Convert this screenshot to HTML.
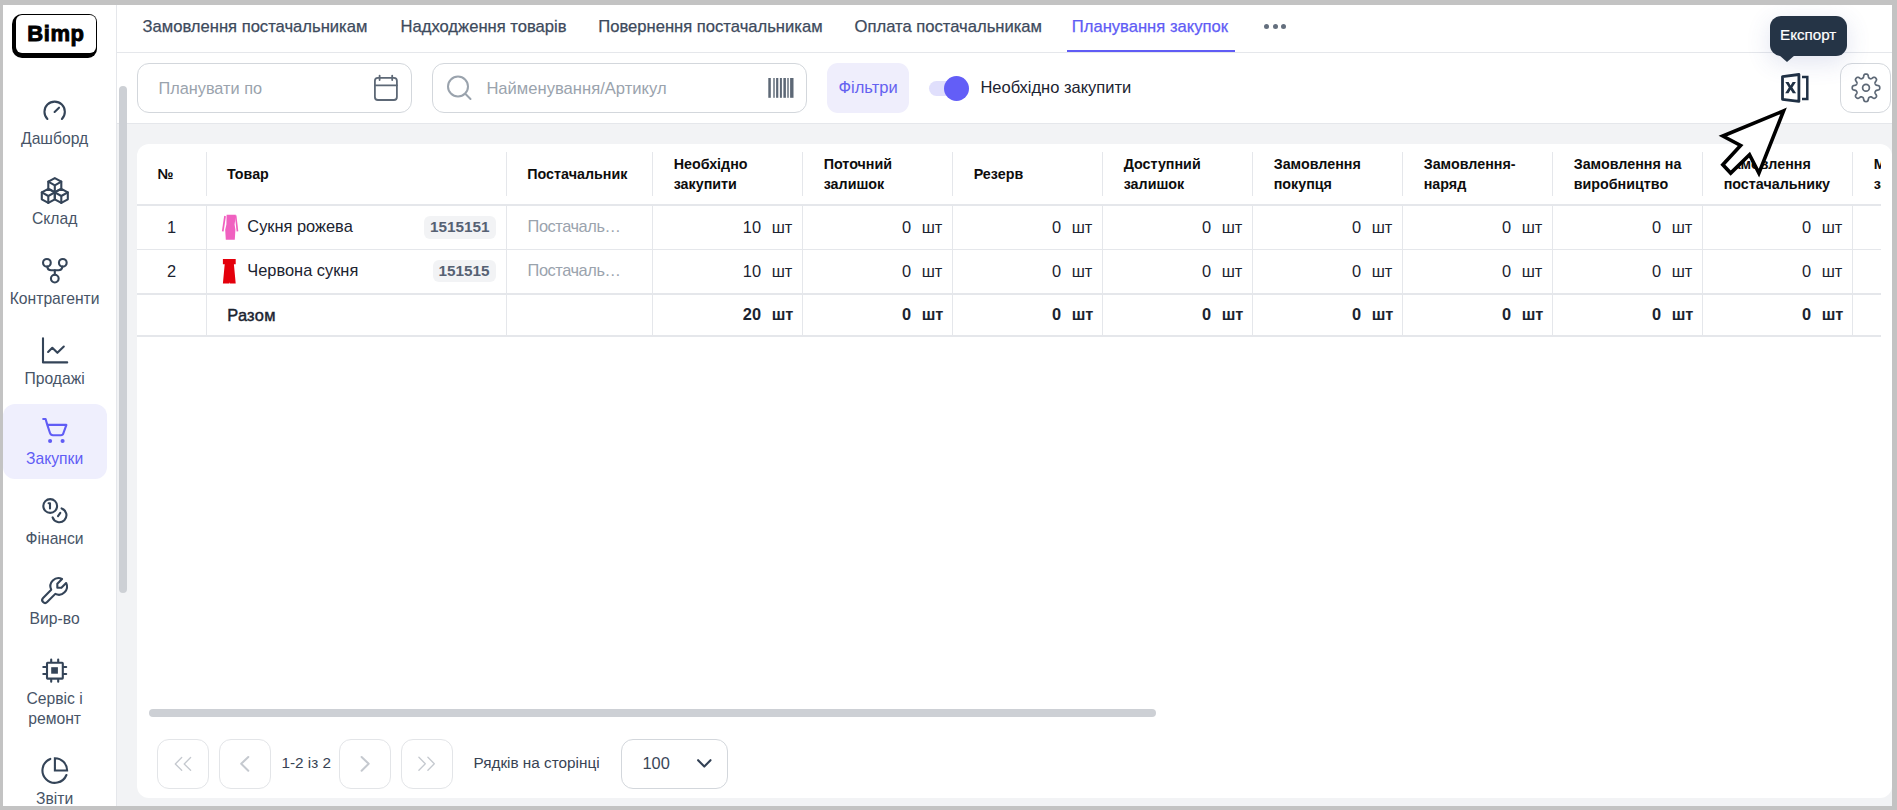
<!DOCTYPE html>
<html><head><meta charset="utf-8"><style>
html,body{margin:0;padding:0}
body{width:1897px;height:810px;position:relative;overflow:hidden;background:#c3c3c3;font-family:"Liberation Sans",sans-serif}
.t{position:absolute;white-space:nowrap}
svg{pointer-events:none}
</style></head><body>
<div style="position:absolute;left:3px;top:5px;width:1889px;height:801px;background:#fff"></div>
<div style="position:absolute;left:117px;top:124px;width:1775px;height:682px;background:#f2f3f5"></div>
<div style="position:absolute;left:117px;top:52px;width:1775px;height:1px;background:#e5e7eb"></div>
<div style="position:absolute;left:117px;top:123px;width:1775px;height:1px;background:#e5e7eb"></div>
<div style="position:absolute;left:116px;top:5px;width:1px;height:801px;background:#e5e7eb"></div>
<div style="position:absolute;left:12px;top:14px;width:85px;height:44px;background:#000;border-radius:10px 8px 9px 10px"></div>
<div style="position:absolute;left:16px;top:15px;width:80px;height:38px;background:#fff;border-radius:6px"></div>
<div class="t" style="left:27.3px;top:20px;font-size:22px;line-height:28px;color:#000;font-weight:700;-webkit-text-stroke:0.9px #000;letter-spacing:0.55px">Bimp</div>
<div style="position:absolute;left:3px;top:404px;width:104px;height:75px;background:#efeffd;border-radius:12px"></div>
<div class="t" style="left:-245.4px;width:600px;text-align:center;top:129px;font-size:15.7px;line-height:20px;color:#475467;font-weight:400;">Дашборд</div>
<div class="t" style="left:-245.4px;width:600px;text-align:center;top:209px;font-size:15.7px;line-height:20px;color:#475467;font-weight:400;">Склад</div>
<div class="t" style="left:-245.4px;width:600px;text-align:center;top:289px;font-size:15.7px;line-height:20px;color:#475467;font-weight:400;">Контрагенти</div>
<div class="t" style="left:-245.4px;width:600px;text-align:center;top:369px;font-size:15.7px;line-height:20px;color:#475467;font-weight:400;">Продажі</div>
<div class="t" style="left:-245.4px;width:600px;text-align:center;top:449px;font-size:15.7px;line-height:20px;color:#605cf5;font-weight:400;">Закупки</div>
<div class="t" style="left:-245.4px;width:600px;text-align:center;top:529px;font-size:15.7px;line-height:20px;color:#475467;font-weight:400;">Фінанси</div>
<div class="t" style="left:-245.4px;width:600px;text-align:center;top:609px;font-size:15.7px;line-height:20px;color:#475467;font-weight:400;">Вир-во</div>
<div class="t" style="left:-245.4px;width:600px;text-align:center;top:689px;font-size:15.7px;line-height:20px;color:#475467;font-weight:400;">Сервіс і</div>
<div class="t" style="left:-245.4px;width:600px;text-align:center;top:709px;font-size:15.7px;line-height:20px;color:#475467;font-weight:400;">ремонт</div>
<div class="t" style="left:-245.4px;width:600px;text-align:center;top:789px;font-size:15.7px;line-height:20px;color:#475467;font-weight:400;">Звіти</div>
<svg style="position:absolute;left:0;top:0;overflow:visible" width="1897" height="810" viewBox="0 0 1897 810" fill="none"><g stroke="#344458" stroke-width="2.1" stroke-linecap="round" stroke-linejoin="round"><path d="M47.4 119.0 A10.2 10.2 0 1 1 61.9 119.0"/><path d="M54.6 111.9 L59.0 107.7"/><path d="M54.8 178.1 L61.3 181.7 V188.6 L54.8 192.2 L48.3 188.6 V181.7 Z"/><path d="M48.3 181.7 L54.8 185.29999999999998 L61.3 181.7 M54.8 185.29999999999998 V192.2"/><path d="M48.3 188.8 L54.8 192.4 V199.3 L48.3 202.9 L41.8 199.3 V192.4 Z"/><path d="M41.8 192.4 L48.3 196.0 L54.8 192.4 M48.3 196.0 V202.9"/><path d="M61.3 188.8 L67.8 192.4 V199.3 L61.3 202.9 L54.8 199.3 V192.4 Z"/><path d="M54.8 192.4 L61.3 196.0 L67.8 192.4 M61.3 196.0 V202.9"/><circle cx="46.9" cy="262.8" r="3.85"/><circle cx="62.8" cy="262.8" r="3.85"/><circle cx="54.8" cy="278.6" r="3.85"/><path d="M47.4 266.6 Q47.6 270.2 51.2 270.2 H58.4 Q62.0 270.2 62.3 266.6"/><path d="M54.8 270.2 V274.7"/><path d="M43.0 338.2 V362.4 H67.2" stroke-linejoin="round"/><path d="M48.1 352.0 L52.3 347.8 L57.4 352.8 L63.8 346.5"/><circle cx="50.2" cy="506.0" r="6.9"/><path d="M48.6 503.3 H50.0 V508.4"/><path d="M61.6 508.4 A7.1 7.1 0 1 1 52.6 517.4"/><path d="M58.0 516.2 L60.3 512.8"/><path transform="translate(70.9 574.2) scale(-1.357 1.357)" stroke-width="1.55" d="M7 10h3v-3l-3.5 -3.5a6 6 0 0 1 8 8l6 6a2 2 0 0 1 -3 3l-6 -6a6 6 0 0 1 -8 -8l3.5 3.5"/><rect x="47.0" y="662.8" width="15.8" height="15.8" rx="0.6"/><rect x="51.2" y="667.2" width="6.7" height="6.5" fill="#344458" stroke="none"/><path d="M51.2 659.6 V662 M58.2 659.6 V662 M51.2 679.4 V681.8 M58.2 679.4 V681.8 M43.3 667.0 H46 M43.3 674.0 H46 M63.8 667.0 H66.2 M63.8 674.0 H66.2"/><path d="M50.3 758.9 A12.4 12.4 0 1 0 66.4 775.0"/><path d="M54.9 758.2 V770.5 H67.1 A12.3 12.3 0 0 0 54.9 758.2 Z" stroke-linejoin="miter"/></g></svg>
<svg style="position:absolute;left:0;top:0;overflow:visible" width="1897" height="810" viewBox="0 0 1897 810" fill="none"><g stroke="#605cf5" stroke-width="2.1" stroke-linecap="round" stroke-linejoin="round"><path d="M43.2 419.0 H45.6 L47.3 424.9 L50.0 433.0 Q50.7 435.2 53.0 435.2 H60.8 Q62.9 435.2 63.4 433.2 L66.4 424.9 H47.3"/></g><circle cx="50.1" cy="441.0" r="2.05" fill="#605cf5"/><circle cx="62.6" cy="441.0" r="2.05" fill="#605cf5"/></svg>
<div style="position:absolute;left:119px;top:86px;width:8px;height:507px;background:#cdd0d5;border-radius:4px"></div>
<div class="t" style="left:142.5px;top:16px;font-size:16.6px;line-height:21px;color:#3d4a5c;font-weight:400;-webkit-text-stroke:0.25px #3d4a5c">Замовлення постачальникам</div>
<div class="t" style="left:400.5px;top:16px;font-size:16.6px;line-height:21px;color:#3d4a5c;font-weight:400;-webkit-text-stroke:0.25px #3d4a5c">Надходження товарів</div>
<div class="t" style="left:598.3px;top:16px;font-size:16.6px;line-height:21px;color:#3d4a5c;font-weight:400;-webkit-text-stroke:0.25px #3d4a5c">Повернення постачальникам</div>
<div class="t" style="left:854.6px;top:16px;font-size:16.6px;line-height:21px;color:#3d4a5c;font-weight:400;-webkit-text-stroke:0.25px #3d4a5c">Оплата постачальникам</div>
<div class="t" style="left:1071.8px;top:16px;font-size:16.6px;line-height:21px;color:#605cf5;font-weight:400;-webkit-text-stroke:0.25px #605cf5">Планування закупок</div>
<div style="position:absolute;left:1067px;top:50px;width:168px;height:2px;background:#605cf5"></div>
<div style="position:absolute;left:1263.7px;top:23.5px;width:5px;height:5px;background:#646f7e;border-radius:50%"></div>
<div style="position:absolute;left:1272.5px;top:23.5px;width:5px;height:5px;background:#646f7e;border-radius:50%"></div>
<div style="position:absolute;left:1281.3px;top:23.5px;width:5px;height:5px;background:#646f7e;border-radius:50%"></div>
<div style="position:absolute;left:137px;top:63px;width:275px;height:50px;box-sizing:border-box;border:1px solid #d3d7dc;border-radius:12px;background:#fff"></div>
<div class="t" style="left:158.5px;top:78px;font-size:16.3px;line-height:21px;color:#9aa3ad;font-weight:400;">Планувати по</div>
<div style="position:absolute;left:432px;top:63px;width:375px;height:50px;box-sizing:border-box;border:1px solid #d3d7dc;border-radius:12px;background:#fff"></div>
<div class="t" style="left:486.4px;top:78px;font-size:16.6px;line-height:21px;color:#9aa3ad;font-weight:400;">Найменування/Артикул</div>
<div style="position:absolute;left:827px;top:63px;width:82px;height:50px;background:#efeefc;border-radius:11px"></div>
<div class="t" style="left:838.5px;top:77px;font-size:16.5px;line-height:21px;color:#6461f0;font-weight:400;">Фільтри</div>
<div style="position:absolute;left:929px;top:81px;width:38px;height:15px;background:#e0dffc;border-radius:7.5px"></div>
<div style="position:absolute;left:944px;top:76px;width:25px;height:25px;background:#635ef7;border-radius:50%"></div>
<div class="t" style="left:980.4px;top:77px;font-size:16.5px;line-height:21px;color:#1b2330;font-weight:400;">Необхідно закупити</div>
<div style="position:absolute;left:1840px;top:63px;width:51px;height:50px;box-sizing:border-box;border:1px solid #d3d7dc;border-radius:12px;background:#fff"></div>
<svg style="position:absolute;left:0;top:0;overflow:visible" width="1897" height="810" viewBox="0 0 1897 810" fill="none"><g stroke="#5d6876" stroke-width="1.8" stroke-linecap="round" stroke-linejoin="round"><rect x="374.9" y="77.8" width="22" height="22.2" rx="3"/><path d="M374.9 85.3 H396.9 M379.6 75.6 V80.1 M392.2 75.6 V80.1"/></g><g stroke="#9aa3ad" stroke-width="2" stroke-linecap="round"><circle cx="458" cy="86.5" r="10"/><path d="M465.5 94 L470.5 99"/></g><rect x="768.3" y="78" width="2.5" height="19.8" fill="#5d6876"/><rect x="773.3" y="78" width="1.4" height="19.8" fill="#5d6876"/><rect x="776.1" y="78" width="2.2" height="19.8" fill="#5d6876"/><rect x="779.9" y="78" width="2.0" height="19.8" fill="#5d6876"/><rect x="783.4" y="78" width="2.5" height="19.8" fill="#5d6876"/><rect x="787.3" y="78" width="1.4" height="19.8" fill="#5d6876"/><rect x="790.1" y="78" width="3.4" height="19.8" fill="#5d6876"/><g stroke="#1f3044" fill="none"><path d="M1782.5 76.6 L1798.9 74.5 V101.4 L1782.5 99.3 Z" stroke-width="2.8" stroke-linejoin="round"/><path d="M1802 76.9 H1807.3 V98.9 H1802" stroke-width="2.5"/></g><path fill="#1f3044" d="M1785.3 82.1 L1788.6 82.1 L1790.6 85.4 L1792.6 82.1 L1795.9 82.1 L1792.4 87.6 L1796.1 93.3 L1792.8 93.3 L1790.6 89.8 L1788.5 93.3 L1785.2 93.3 L1788.8 87.6 Z"/><path d="M1879.75 87.80 L1879.74 88.04 L1879.73 88.28 L1879.69 88.52 L1879.64 88.75 L1879.57 88.99 L1879.46 89.21 L1879.29 89.43 L1879.06 89.64 L1878.73 89.82 L1878.30 89.97 L1877.80 90.09 L1877.28 90.20 L1876.81 90.30 L1876.43 90.40 L1876.14 90.52 L1875.93 90.65 L1875.77 90.79 L1875.65 90.94 L1875.55 91.09 L1875.47 91.25 L1875.39 91.40 L1875.32 91.57 L1875.25 91.73 L1875.19 91.89 L1875.13 92.06 L1875.08 92.23 L1875.04 92.41 L1875.02 92.60 L1875.03 92.81 L1875.09 93.05 L1875.22 93.34 L1875.41 93.68 L1875.68 94.08 L1875.97 94.52 L1876.23 94.96 L1876.43 95.37 L1876.53 95.74 L1876.55 96.05 L1876.52 96.32 L1876.43 96.56 L1876.32 96.77 L1876.19 96.98 L1876.05 97.17 L1875.89 97.35 L1875.72 97.52 L1875.55 97.69 L1875.37 97.85 L1875.18 97.99 L1874.97 98.12 L1874.76 98.23 L1874.52 98.32 L1874.25 98.35 L1873.94 98.33 L1873.57 98.23 L1873.16 98.03 L1872.72 97.77 L1872.28 97.48 L1871.88 97.21 L1871.54 97.02 L1871.25 96.89 L1871.01 96.83 L1870.80 96.82 L1870.61 96.84 L1870.43 96.88 L1870.26 96.93 L1870.09 96.99 L1869.93 97.05 L1869.77 97.12 L1869.60 97.19 L1869.45 97.27 L1869.29 97.35 L1869.14 97.45 L1868.99 97.57 L1868.85 97.73 L1868.72 97.94 L1868.60 98.23 L1868.50 98.61 L1868.40 99.08 L1868.29 99.60 L1868.17 100.10 L1868.02 100.53 L1867.84 100.86 L1867.63 101.09 L1867.41 101.26 L1867.19 101.37 L1866.95 101.44 L1866.72 101.49 L1866.48 101.53 L1866.24 101.54 L1866.00 101.55 L1865.76 101.54 L1865.52 101.53 L1865.28 101.49 L1865.05 101.44 L1864.81 101.37 L1864.59 101.26 L1864.37 101.09 L1864.16 100.86 L1863.98 100.53 L1863.83 100.10 L1863.71 99.60 L1863.60 99.08 L1863.50 98.61 L1863.40 98.23 L1863.28 97.94 L1863.15 97.73 L1863.01 97.57 L1862.86 97.45 L1862.71 97.35 L1862.55 97.27 L1862.40 97.19 L1862.23 97.12 L1862.07 97.05 L1861.91 96.99 L1861.74 96.93 L1861.57 96.88 L1861.39 96.84 L1861.20 96.82 L1860.99 96.83 L1860.75 96.89 L1860.46 97.02 L1860.12 97.21 L1859.72 97.48 L1859.28 97.77 L1858.84 98.03 L1858.43 98.23 L1858.06 98.33 L1857.75 98.35 L1857.48 98.32 L1857.24 98.23 L1857.03 98.12 L1856.82 97.99 L1856.63 97.85 L1856.45 97.69 L1856.28 97.52 L1856.11 97.35 L1855.95 97.17 L1855.81 96.98 L1855.68 96.77 L1855.57 96.56 L1855.48 96.32 L1855.45 96.05 L1855.47 95.74 L1855.57 95.37 L1855.77 94.96 L1856.03 94.52 L1856.32 94.08 L1856.59 93.68 L1856.78 93.34 L1856.91 93.05 L1856.97 92.81 L1856.98 92.60 L1856.96 92.41 L1856.92 92.23 L1856.87 92.06 L1856.81 91.89 L1856.75 91.73 L1856.68 91.57 L1856.61 91.40 L1856.53 91.25 L1856.45 91.09 L1856.35 90.94 L1856.23 90.79 L1856.07 90.65 L1855.86 90.52 L1855.57 90.40 L1855.19 90.30 L1854.72 90.20 L1854.20 90.09 L1853.70 89.97 L1853.27 89.82 L1852.94 89.64 L1852.71 89.43 L1852.54 89.21 L1852.43 88.99 L1852.36 88.75 L1852.31 88.52 L1852.27 88.28 L1852.26 88.04 L1852.25 87.80 L1852.26 87.56 L1852.27 87.32 L1852.31 87.08 L1852.36 86.85 L1852.43 86.61 L1852.54 86.39 L1852.71 86.17 L1852.94 85.96 L1853.27 85.78 L1853.70 85.63 L1854.20 85.51 L1854.72 85.40 L1855.19 85.30 L1855.57 85.20 L1855.86 85.08 L1856.07 84.95 L1856.23 84.81 L1856.35 84.66 L1856.45 84.51 L1856.53 84.35 L1856.61 84.20 L1856.68 84.03 L1856.75 83.87 L1856.81 83.71 L1856.87 83.54 L1856.92 83.37 L1856.96 83.19 L1856.98 83.00 L1856.97 82.79 L1856.91 82.55 L1856.78 82.26 L1856.59 81.92 L1856.32 81.52 L1856.03 81.08 L1855.77 80.64 L1855.57 80.23 L1855.47 79.86 L1855.45 79.55 L1855.48 79.28 L1855.57 79.04 L1855.68 78.83 L1855.81 78.62 L1855.95 78.43 L1856.11 78.25 L1856.28 78.08 L1856.45 77.91 L1856.63 77.75 L1856.82 77.61 L1857.03 77.48 L1857.24 77.37 L1857.48 77.28 L1857.75 77.25 L1858.06 77.27 L1858.43 77.37 L1858.84 77.57 L1859.28 77.83 L1859.72 78.12 L1860.12 78.39 L1860.46 78.58 L1860.75 78.71 L1860.99 78.77 L1861.20 78.78 L1861.39 78.76 L1861.57 78.72 L1861.74 78.67 L1861.91 78.61 L1862.07 78.55 L1862.23 78.48 L1862.40 78.41 L1862.55 78.33 L1862.71 78.25 L1862.86 78.15 L1863.01 78.03 L1863.15 77.87 L1863.28 77.66 L1863.40 77.37 L1863.50 76.99 L1863.60 76.52 L1863.71 76.00 L1863.83 75.50 L1863.98 75.07 L1864.16 74.74 L1864.37 74.51 L1864.59 74.34 L1864.81 74.23 L1865.05 74.16 L1865.28 74.11 L1865.52 74.07 L1865.76 74.06 L1866.00 74.05 L1866.24 74.06 L1866.48 74.07 L1866.72 74.11 L1866.95 74.16 L1867.19 74.23 L1867.41 74.34 L1867.63 74.51 L1867.84 74.74 L1868.02 75.07 L1868.17 75.50 L1868.29 76.00 L1868.40 76.52 L1868.50 76.99 L1868.60 77.37 L1868.72 77.66 L1868.85 77.87 L1868.99 78.03 L1869.14 78.15 L1869.29 78.25 L1869.45 78.33 L1869.60 78.41 L1869.77 78.48 L1869.93 78.55 L1870.09 78.61 L1870.26 78.67 L1870.43 78.72 L1870.61 78.76 L1870.80 78.78 L1871.01 78.77 L1871.25 78.71 L1871.54 78.58 L1871.88 78.39 L1872.28 78.12 L1872.72 77.83 L1873.16 77.57 L1873.57 77.37 L1873.94 77.27 L1874.25 77.25 L1874.52 77.28 L1874.76 77.37 L1874.97 77.48 L1875.18 77.61 L1875.37 77.75 L1875.55 77.91 L1875.72 78.08 L1875.89 78.25 L1876.05 78.43 L1876.19 78.62 L1876.32 78.83 L1876.43 79.04 L1876.52 79.28 L1876.55 79.55 L1876.53 79.86 L1876.43 80.23 L1876.23 80.64 L1875.97 81.08 L1875.68 81.52 L1875.41 81.92 L1875.22 82.26 L1875.09 82.55 L1875.03 82.79 L1875.02 83.00 L1875.04 83.19 L1875.08 83.37 L1875.13 83.54 L1875.19 83.71 L1875.25 83.87 L1875.32 84.03 L1875.39 84.20 L1875.47 84.35 L1875.55 84.51 L1875.65 84.66 L1875.77 84.81 L1875.93 84.95 L1876.14 85.08 L1876.43 85.20 L1876.81 85.30 L1877.28 85.40 L1877.80 85.51 L1878.30 85.63 L1878.73 85.78 L1879.06 85.96 L1879.29 86.17 L1879.46 86.39 L1879.57 86.61 L1879.64 86.85 L1879.69 87.08 L1879.73 87.32 L1879.74 87.56 Z" stroke="#5d6876" stroke-width="1.7" stroke-linejoin="round"/><circle cx="1866.0" cy="87.8" r="3.4" stroke="#5d6876" stroke-width="1.7"/></svg>
<div style="position:absolute;left:137px;top:144px;width:1755px;height:654px;background:#fff;border-radius:12px"></div>
<div style="position:absolute;left:137px;top:144px;width:1744px;height:200px;overflow:hidden">
<div style="position:absolute;left:0px;top:60px;width:1744px;height:2px;background:#e5e7eb"></div>
<div style="position:absolute;left:0px;top:105px;width:1744px;height:1px;background:#e5e7eb"></div>
<div style="position:absolute;left:0px;top:149px;width:1744px;height:2px;background:#e5e7eb"></div>
<div style="position:absolute;left:0px;top:191px;width:1744px;height:2px;background:#e5e7eb"></div>
<div style="position:absolute;left:69px;top:8px;width:1px;height:44px;background:#e5e7eb"></div>
<div style="position:absolute;left:69px;top:62px;width:1px;height:129px;background:#e5e7eb"></div>
<div style="position:absolute;left:369px;top:8px;width:1px;height:44px;background:#e5e7eb"></div>
<div style="position:absolute;left:369px;top:62px;width:1px;height:129px;background:#e5e7eb"></div>
<div style="position:absolute;left:515px;top:8px;width:1px;height:44px;background:#e5e7eb"></div>
<div style="position:absolute;left:515px;top:62px;width:1px;height:129px;background:#e5e7eb"></div>
<div style="position:absolute;left:665px;top:8px;width:1px;height:44px;background:#e5e7eb"></div>
<div style="position:absolute;left:665px;top:62px;width:1px;height:129px;background:#e5e7eb"></div>
<div style="position:absolute;left:815px;top:8px;width:1px;height:44px;background:#e5e7eb"></div>
<div style="position:absolute;left:815px;top:62px;width:1px;height:129px;background:#e5e7eb"></div>
<div style="position:absolute;left:965px;top:8px;width:1px;height:44px;background:#e5e7eb"></div>
<div style="position:absolute;left:965px;top:62px;width:1px;height:129px;background:#e5e7eb"></div>
<div style="position:absolute;left:1115px;top:8px;width:1px;height:44px;background:#e5e7eb"></div>
<div style="position:absolute;left:1115px;top:62px;width:1px;height:129px;background:#e5e7eb"></div>
<div style="position:absolute;left:1265px;top:8px;width:1px;height:44px;background:#e5e7eb"></div>
<div style="position:absolute;left:1265px;top:62px;width:1px;height:129px;background:#e5e7eb"></div>
<div style="position:absolute;left:1415px;top:8px;width:1px;height:44px;background:#e5e7eb"></div>
<div style="position:absolute;left:1415px;top:62px;width:1px;height:129px;background:#e5e7eb"></div>
<div style="position:absolute;left:1565px;top:8px;width:1px;height:44px;background:#e5e7eb"></div>
<div style="position:absolute;left:1565px;top:62px;width:1px;height:129px;background:#e5e7eb"></div>
<div style="position:absolute;left:1715px;top:8px;width:1px;height:44px;background:#e5e7eb"></div>
<div style="position:absolute;left:1715px;top:62px;width:1px;height:129px;background:#e5e7eb"></div>
<div class="t" style="left:20.5px;top:21px;font-size:14.3px;line-height:18px;color:#0d0d0d;font-weight:700;">№</div>
<div class="t" style="left:90px;top:21px;font-size:14.3px;line-height:18px;color:#0d0d0d;font-weight:700;">Товар</div>
<div class="t" style="left:390.29999999999995px;top:21px;font-size:14.3px;line-height:18px;color:#0d0d0d;font-weight:700;">Постачальник</div>
<div class="t" style="left:536.7px;top:11px;font-size:14.3px;line-height:18px;color:#0d0d0d;font-weight:700;">Необхідно</div>
<div class="t" style="left:536.7px;top:31px;font-size:14.3px;line-height:18px;color:#0d0d0d;font-weight:700;">закупити</div>
<div class="t" style="left:686.7px;top:11px;font-size:14.3px;line-height:18px;color:#0d0d0d;font-weight:700;">Поточний</div>
<div class="t" style="left:686.7px;top:31px;font-size:14.3px;line-height:18px;color:#0d0d0d;font-weight:700;">залишок</div>
<div class="t" style="left:836.7px;top:21px;font-size:14.3px;line-height:18px;color:#0d0d0d;font-weight:700;">Резерв</div>
<div class="t" style="left:986.7px;top:11px;font-size:14.3px;line-height:18px;color:#0d0d0d;font-weight:700;">Доступний</div>
<div class="t" style="left:986.7px;top:31px;font-size:14.3px;line-height:18px;color:#0d0d0d;font-weight:700;">залишок</div>
<div class="t" style="left:1136.7px;top:11px;font-size:14.3px;line-height:18px;color:#0d0d0d;font-weight:700;">Замовлення</div>
<div class="t" style="left:1136.7px;top:31px;font-size:14.3px;line-height:18px;color:#0d0d0d;font-weight:700;">покупця</div>
<div class="t" style="left:1286.7px;top:11px;font-size:14.3px;line-height:18px;color:#0d0d0d;font-weight:700;">Замовлення-</div>
<div class="t" style="left:1286.7px;top:31px;font-size:14.3px;line-height:18px;color:#0d0d0d;font-weight:700;">наряд</div>
<div class="t" style="left:1436.7px;top:11px;font-size:14.3px;line-height:18px;color:#0d0d0d;font-weight:700;">Замовлення на</div>
<div class="t" style="left:1436.7px;top:31px;font-size:14.3px;line-height:18px;color:#0d0d0d;font-weight:700;">виробництво</div>
<div class="t" style="left:1586.7px;top:11px;font-size:14.3px;line-height:18px;color:#0d0d0d;font-weight:700;">Замовлення</div>
<div class="t" style="left:1586.7px;top:31px;font-size:14.3px;line-height:18px;color:#0d0d0d;font-weight:700;">постачальнику</div>
<div class="t" style="left:1736.7px;top:11px;font-size:14.3px;line-height:18px;color:#0d0d0d;font-weight:700;">Мінімальний</div>
<div class="t" style="left:1736.7px;top:31px;font-size:14.3px;line-height:18px;color:#0d0d0d;font-weight:700;">запас</div>
<div class="t" style="left:-265.5px;width:600px;text-align:center;top:73px;font-size:16.4px;line-height:21px;color:#1b2330;font-weight:400;">1</div>
<div class="t" style="left:-265.5px;width:600px;text-align:center;top:117px;font-size:16.4px;line-height:21px;color:#1b2330;font-weight:400;">2</div>
<div class="t" style="left:110.30000000000001px;top:72px;font-size:16.4px;line-height:21px;color:#1b2330;font-weight:400;">Сукня рожева</div>
<div class="t" style="left:110.30000000000001px;top:116px;font-size:16.4px;line-height:21px;color:#1b2330;font-weight:400;">Червона сукня</div>
<div style="position:absolute;left:287px;top:72px;width:72px;height:23px;background:#f2f3f5;border-radius:6px"></div>
<div style="position:absolute;left:296px;top:116px;width:63px;height:22px;background:#f2f3f5;border-radius:6px"></div>
<div class="t" style="left:-47.5px;width:400px;text-align:right;top:73px;font-size:15.3px;line-height:20px;color:#566173;font-weight:700;">1515151</div>
<div class="t" style="left:-47.5px;width:400px;text-align:right;top:117px;font-size:15.3px;line-height:20px;color:#566173;font-weight:700;">151515</div>
<div class="t" style="left:390.6px;top:72px;font-size:16.4px;line-height:21px;color:#9aa3ad;font-weight:400;letter-spacing:-0.45px">Постачаль…</div>
<div class="t" style="left:390.6px;top:116px;font-size:16.4px;line-height:21px;color:#9aa3ad;font-weight:400;letter-spacing:-0.45px">Постачаль…</div>
<div class="t" style="left:90.19999999999999px;top:161px;font-size:16.4px;line-height:21px;color:#1b2330;font-weight:400;-webkit-text-stroke:0.45px #1b2330;letter-spacing:0.3px">Разом</div>
<div class="t" style="left:224px;width:400px;text-align:right;top:73px;font-size:16.4px;line-height:21px;color:#1b2330;font-weight:400;">10</div>
<div class="t" style="left:634.7px;top:73px;font-size:16.4px;line-height:21px;color:#1b2330;font-weight:400;">шт</div>
<div class="t" style="left:224px;width:400px;text-align:right;top:117px;font-size:16.4px;line-height:21px;color:#1b2330;font-weight:400;">10</div>
<div class="t" style="left:634.7px;top:117px;font-size:16.4px;line-height:21px;color:#1b2330;font-weight:400;">шт</div>
<div class="t" style="left:224px;width:400px;text-align:right;top:160px;font-size:16.4px;line-height:21px;color:#1b2330;font-weight:700;">20</div>
<div class="t" style="left:634.7px;top:160px;font-size:16.4px;line-height:21px;color:#1b2330;font-weight:700;">шт</div>
<div class="t" style="left:374px;width:400px;text-align:right;top:73px;font-size:16.4px;line-height:21px;color:#1b2330;font-weight:400;">0</div>
<div class="t" style="left:784.7px;top:73px;font-size:16.4px;line-height:21px;color:#1b2330;font-weight:400;">шт</div>
<div class="t" style="left:374px;width:400px;text-align:right;top:117px;font-size:16.4px;line-height:21px;color:#1b2330;font-weight:400;">0</div>
<div class="t" style="left:784.7px;top:117px;font-size:16.4px;line-height:21px;color:#1b2330;font-weight:400;">шт</div>
<div class="t" style="left:374px;width:400px;text-align:right;top:160px;font-size:16.4px;line-height:21px;color:#1b2330;font-weight:700;">0</div>
<div class="t" style="left:784.7px;top:160px;font-size:16.4px;line-height:21px;color:#1b2330;font-weight:700;">шт</div>
<div class="t" style="left:524px;width:400px;text-align:right;top:73px;font-size:16.4px;line-height:21px;color:#1b2330;font-weight:400;">0</div>
<div class="t" style="left:934.7px;top:73px;font-size:16.4px;line-height:21px;color:#1b2330;font-weight:400;">шт</div>
<div class="t" style="left:524px;width:400px;text-align:right;top:117px;font-size:16.4px;line-height:21px;color:#1b2330;font-weight:400;">0</div>
<div class="t" style="left:934.7px;top:117px;font-size:16.4px;line-height:21px;color:#1b2330;font-weight:400;">шт</div>
<div class="t" style="left:524px;width:400px;text-align:right;top:160px;font-size:16.4px;line-height:21px;color:#1b2330;font-weight:700;">0</div>
<div class="t" style="left:934.7px;top:160px;font-size:16.4px;line-height:21px;color:#1b2330;font-weight:700;">шт</div>
<div class="t" style="left:674px;width:400px;text-align:right;top:73px;font-size:16.4px;line-height:21px;color:#1b2330;font-weight:400;">0</div>
<div class="t" style="left:1084.7px;top:73px;font-size:16.4px;line-height:21px;color:#1b2330;font-weight:400;">шт</div>
<div class="t" style="left:674px;width:400px;text-align:right;top:117px;font-size:16.4px;line-height:21px;color:#1b2330;font-weight:400;">0</div>
<div class="t" style="left:1084.7px;top:117px;font-size:16.4px;line-height:21px;color:#1b2330;font-weight:400;">шт</div>
<div class="t" style="left:674px;width:400px;text-align:right;top:160px;font-size:16.4px;line-height:21px;color:#1b2330;font-weight:700;">0</div>
<div class="t" style="left:1084.7px;top:160px;font-size:16.4px;line-height:21px;color:#1b2330;font-weight:700;">шт</div>
<div class="t" style="left:824px;width:400px;text-align:right;top:73px;font-size:16.4px;line-height:21px;color:#1b2330;font-weight:400;">0</div>
<div class="t" style="left:1234.7px;top:73px;font-size:16.4px;line-height:21px;color:#1b2330;font-weight:400;">шт</div>
<div class="t" style="left:824px;width:400px;text-align:right;top:117px;font-size:16.4px;line-height:21px;color:#1b2330;font-weight:400;">0</div>
<div class="t" style="left:1234.7px;top:117px;font-size:16.4px;line-height:21px;color:#1b2330;font-weight:400;">шт</div>
<div class="t" style="left:824px;width:400px;text-align:right;top:160px;font-size:16.4px;line-height:21px;color:#1b2330;font-weight:700;">0</div>
<div class="t" style="left:1234.7px;top:160px;font-size:16.4px;line-height:21px;color:#1b2330;font-weight:700;">шт</div>
<div class="t" style="left:974px;width:400px;text-align:right;top:73px;font-size:16.4px;line-height:21px;color:#1b2330;font-weight:400;">0</div>
<div class="t" style="left:1384.7px;top:73px;font-size:16.4px;line-height:21px;color:#1b2330;font-weight:400;">шт</div>
<div class="t" style="left:974px;width:400px;text-align:right;top:117px;font-size:16.4px;line-height:21px;color:#1b2330;font-weight:400;">0</div>
<div class="t" style="left:1384.7px;top:117px;font-size:16.4px;line-height:21px;color:#1b2330;font-weight:400;">шт</div>
<div class="t" style="left:974px;width:400px;text-align:right;top:160px;font-size:16.4px;line-height:21px;color:#1b2330;font-weight:700;">0</div>
<div class="t" style="left:1384.7px;top:160px;font-size:16.4px;line-height:21px;color:#1b2330;font-weight:700;">шт</div>
<div class="t" style="left:1124px;width:400px;text-align:right;top:73px;font-size:16.4px;line-height:21px;color:#1b2330;font-weight:400;">0</div>
<div class="t" style="left:1534.7px;top:73px;font-size:16.4px;line-height:21px;color:#1b2330;font-weight:400;">шт</div>
<div class="t" style="left:1124px;width:400px;text-align:right;top:117px;font-size:16.4px;line-height:21px;color:#1b2330;font-weight:400;">0</div>
<div class="t" style="left:1534.7px;top:117px;font-size:16.4px;line-height:21px;color:#1b2330;font-weight:400;">шт</div>
<div class="t" style="left:1124px;width:400px;text-align:right;top:160px;font-size:16.4px;line-height:21px;color:#1b2330;font-weight:700;">0</div>
<div class="t" style="left:1534.7px;top:160px;font-size:16.4px;line-height:21px;color:#1b2330;font-weight:700;">шт</div>
<div class="t" style="left:1274px;width:400px;text-align:right;top:73px;font-size:16.4px;line-height:21px;color:#1b2330;font-weight:400;">0</div>
<div class="t" style="left:1684.7px;top:73px;font-size:16.4px;line-height:21px;color:#1b2330;font-weight:400;">шт</div>
<div class="t" style="left:1274px;width:400px;text-align:right;top:117px;font-size:16.4px;line-height:21px;color:#1b2330;font-weight:400;">0</div>
<div class="t" style="left:1684.7px;top:117px;font-size:16.4px;line-height:21px;color:#1b2330;font-weight:400;">шт</div>
<div class="t" style="left:1274px;width:400px;text-align:right;top:160px;font-size:16.4px;line-height:21px;color:#1b2330;font-weight:700;">0</div>
<div class="t" style="left:1684.7px;top:160px;font-size:16.4px;line-height:21px;color:#1b2330;font-weight:700;">шт</div>
<div class="t" style="left:1424px;width:400px;text-align:right;top:73px;font-size:16.4px;line-height:21px;color:#1b2330;font-weight:400;">0</div>
<div class="t" style="left:1834.7px;top:73px;font-size:16.4px;line-height:21px;color:#1b2330;font-weight:400;">шт</div>
<div class="t" style="left:1424px;width:400px;text-align:right;top:117px;font-size:16.4px;line-height:21px;color:#1b2330;font-weight:400;">0</div>
<div class="t" style="left:1834.7px;top:117px;font-size:16.4px;line-height:21px;color:#1b2330;font-weight:400;">шт</div>
<div class="t" style="left:1424px;width:400px;text-align:right;top:160px;font-size:16.4px;line-height:21px;color:#1b2330;font-weight:700;">0</div>
<div class="t" style="left:1834.7px;top:160px;font-size:16.4px;line-height:21px;color:#1b2330;font-weight:700;">шт</div>
</div>
<svg style="position:absolute;left:0;top:0;overflow:visible" width="1897" height="810" viewBox="0 0 1897 810" fill="none"><g fill="#f060c0"><path d="M226.6 214.8 L235.9 214.8 L234.6 224.6 L235.4 229.8 L234.8 239.7 L225.8 239.7 L225.2 229.8 L226.4 224.6 Z"/><path d="M224.2 215.8 L225.9 216.2 L223.6 231.4 L221.9 231.2 Z"/><path d="M236.4 215.2 L238.3 231.2 L236.6 231.4 L234.9 216 Z"/></g><path d="M222.9 258.9 L235.7 258.9 L235.7 264.3 L233.9 264.3 L235.7 283.5 L229.6 283.5 L229.3 282.3 L229 283.5 L222.9 283.5 L224.7 264.3 L222.9 264.3 Z" fill="#e4000c"/></svg>
<div style="position:absolute;left:149px;top:709px;width:1007px;height:8px;background:#cdd0d5;border-radius:4px"></div>
<div style="position:absolute;left:621px;top:739px;width:107px;height:50px;box-sizing:border-box;border:1px solid #d3d7dc;border-radius:12px;background:#fff"></div>
<div style="position:absolute;left:157px;top:739px;width:52px;height:50px;box-sizing:border-box;border:1px solid #e3e5e8;border-radius:12px;background:#fff"></div>
<div style="position:absolute;left:219px;top:739px;width:52px;height:50px;box-sizing:border-box;border:1px solid #e3e5e8;border-radius:12px;background:#fff"></div>
<div style="position:absolute;left:339px;top:739px;width:52px;height:50px;box-sizing:border-box;border:1px solid #e3e5e8;border-radius:12px;background:#fff"></div>
<div style="position:absolute;left:401px;top:739px;width:52px;height:50px;box-sizing:border-box;border:1px solid #e3e5e8;border-radius:12px;background:#fff"></div>
<svg style="position:absolute;left:0;top:0;overflow:visible" width="1897" height="810" viewBox="0 0 1897 810" fill="none"><g stroke="#c5c9cf" stroke-linecap="round" stroke-linejoin="round"><path stroke-width="1.3" d="M181.7 757.5 L175.3 764 L181.7 770.3 M190.6 757.5 L184.2 764 L190.6 770.3"/><path stroke-width="2" d="M248.3 757.0 L241.2 763.8 L248.3 770.7"/><path stroke-width="2" d="M361.6 757.0 L368.7 763.8 L361.6 770.7"/><path stroke-width="1.3" d="M418.9 757.3 L425.3 763.8 L418.9 770.2 M427.9 757.3 L434.3 763.8 L427.9 770.2"/></g><path d="M698.1 760.2 L704.3 766.6 L710.5 760.2" stroke="#334155" stroke-width="2.1" stroke-linecap="round" stroke-linejoin="round"/></svg>
<div class="t" style="left:281.5px;top:753px;font-size:15.3px;line-height:20px;color:#384354;font-weight:400;">1-2 із 2</div>
<div class="t" style="left:473.5px;top:753px;font-size:15.3px;line-height:20px;color:#384354;font-weight:400;">Рядків на сторінці</div>
<div class="t" style="left:642.5px;top:753px;font-size:16.4px;line-height:21px;color:#3a4658;font-weight:400;">100</div>
<div style="position:absolute;left:1770px;top:16px;width:77px;height:40px;background:#253446;border-radius:11px;box-shadow:0 6px 24px rgba(60,80,160,0.16)"></div>
<svg style="position:absolute;left:0;top:0;overflow:visible" width="1897" height="810" viewBox="0 0 1897 810" fill="none"><path d="M1779 55 L1795 55 L1787 62 Z" fill="#253446"/></svg>
<div class="t" style="left:1780px;top:25px;font-size:15.2px;line-height:19px;color:#fff;font-weight:400;-webkit-text-stroke:0.2px #fff">Експорт</div>
<svg style="position:absolute;left:0;top:0;overflow:visible" width="1897" height="810" viewBox="0 0 1897 810" fill="none"><path d="M1783.6 110.9 L1722.8 136 L1740.6 145.5 L1722.8 164.7 L1730.7 173.1 L1749.5 154.8 L1758.9 173.1 Z" stroke="#000" stroke-width="3.6" stroke-linejoin="miter" stroke-miterlimit="10" fill="#fff"/></svg>
<div style="position:absolute;left:0px;top:0px;width:1897px;height:5px;background:#c3c3c3"></div>
<div style="position:absolute;left:0px;top:806px;width:1897px;height:4px;background:#c3c3c3"></div>
<div style="position:absolute;left:0px;top:0px;width:3px;height:810px;background:#c3c3c3"></div>
<div style="position:absolute;left:1892px;top:0px;width:5px;height:810px;background:#c3c3c3"></div>
</body></html>
